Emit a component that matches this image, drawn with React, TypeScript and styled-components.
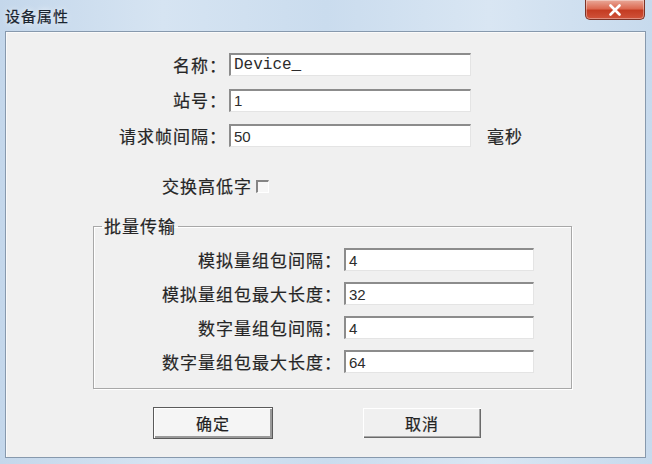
import styled, { createGlobalStyle } from 'styled-components'

const GlobalStyle = createGlobalStyle`
	html, body {
		margin: 0;
		padding: 0;
		background: #c9dbed;
	}
	* {
		box-sizing: border-box;
	}
`

const CJK = `"Noto Sans CJK SC", "Noto Sans", sans-serif`

const topFields = [
	{ label: '名称：', value: 'Device_', mono: true },
	{ label: '站号：', value: '1' },
	{ label: '请求帧间隔：', value: '50', unit: '毫秒' },
]

const batchFields = [
	{ label: '模拟量组包间隔：', value: '4' },
	{ label: '模拟量组包最大长度：', value: '32' },
	{ label: '数字量组包间隔：', value: '4' },
	{ label: '数字量组包最大长度：', value: '64' },
]

const App = () => {
	return (
		<>
			<GlobalStyle />
			<Window>
				<TitleBar>
					<Title>设备属性</Title>
					<CloseButton aria-label='关闭'>
						<svg width='14' height='12' viewBox='0 0 14 12'>
							<path
								d='M2.5 1.5 L11.5 10.5 M11.5 1.5 L2.5 10.5'
								stroke='#fff'
								strokeWidth='2.6'
								strokeLinecap='round'
							/>
						</svg>
					</CloseButton>
				</TitleBar>
				<Panel>
					<TopForm>
						{topFields.map((f) => (
							<FieldRow key={f.label}>
								<Label width={221}>{f.label}</Label>
								<Input width={242} mono={f.mono}>
									{f.value}
								</Input>
								{f.unit && <Unit>{f.unit}</Unit>}
							</FieldRow>
						))}
					</TopForm>
					<CheckRow>
						<Text>交换高低字</Text>
						<CheckBox />
					</CheckRow>
					<GroupBox>
						<Legend>批量传输</Legend>
						<GroupRows>
							{batchFields.map((f) => (
								<FieldRow key={f.label}>
									<Label width={248}>{f.label}</Label>
									<Input width={190}>{f.value}</Input>
								</FieldRow>
							))}
						</GroupRows>
					</GroupBox>
					<ButtonRow>
						<DialogButton primary>确定</DialogButton>
						<DialogButton>取消</DialogButton>
					</ButtonRow>
				</Panel>
			</Window>
		</>
	)
}

export default App

const Window = styled.div`
	width: 652px;
	height: 464px;
	display: flex;
	flex-direction: column;
	padding: 0 6px 6px 5px;
	background: linear-gradient(
		90deg,
		#c4d7eb 0%,
		#d6e4f2 25%,
		#cadcee 50%,
		#d9e6f3 75%,
		#c7daed 100%
	);
	overflow: hidden;
`

const TitleBar = styled.div`
	height: 31px;
	flex-shrink: 0;
	display: flex;
	justify-content: space-between;
	align-items: flex-start;
`

const Title = styled.div`
	padding-top: 7px;
	font-family: ${CJK};
	font-size: 15px;
	line-height: 18px;
	color: #1a2530;
	letter-spacing: 1px;
	-webkit-text-stroke: 0.2px #1a2530;
	text-shadow: 0 0 6px rgba(255, 255, 255, 0.9);
`

const CloseButton = styled.div`
	width: 60px;
	height: 20px;
	margin-right: 1px;
	display: flex;
	align-items: center;
	justify-content: center;
	border: 1px solid #7c3326;
	border-top: none;
	border-radius: 0 0 5px 5px;
	background: linear-gradient(180deg, #e9a999 0%, #dc6a52 45%, #c43c22 55%, #d0533a 100%);
	box-shadow: inset 0 0 0 1px rgba(255, 255, 255, 0.35);
`

const Panel = styled.div`
	flex: 1;
	display: flex;
	flex-direction: column;
	border: 1px solid #8799ad;
	background: #f0f0f0;
	box-shadow: inset 1px 1px 0 #fafafa;
	font-family: ${CJK};
	color: #262626;
	-webkit-text-stroke: 0.2px #262626;
`

const TopForm = styled.div`
	display: flex;
	flex-direction: column;
	gap: 12.5px;
	padding-top: 21px;
`

const FieldRow = styled.div`
	display: flex;
	align-items: center;
	height: 23px;
`

const Label = styled.div<{ width: number }>`
	width: ${({ width }) => width}px;
	margin-right: 2px;
	text-align: right;
	font-size: 17px;
	line-height: 20px;
	letter-spacing: 1px;
	white-space: nowrap;
`

const Input = styled.div<{ width: number; mono?: boolean }>`
	width: ${({ width }) => width}px;
	height: 23px;
	padding-left: 3px;
	display: flex;
	align-items: center;
	background: #fff;
	border-top: 2px solid #8c8c8c;
	border-left: 2px solid #8c8c8c;
	border-right: 1px solid #e4e4e4;
	border-bottom: 1px solid #e4e4e4;
	font-family: ${({ mono }) => (mono ? '"Liberation Mono", monospace' : '"Liberation Sans", sans-serif')};
	font-size: ${({ mono }) => (mono ? '16px' : '15px')};
	color: #2c2c2c;
	-webkit-text-stroke: 0;
`

const Unit = styled.div`
	margin-left: 16px;
	font-size: 17px;
	letter-spacing: 1px;
`

const CheckRow = styled.div`
	display: flex;
	align-items: center;
	height: 20px;
	margin-top: 29px;
	padding-left: 156px;
`

const Text = styled.span`
	font-size: 17px;
	line-height: 20px;
	letter-spacing: 1px;
`

const CheckBox = styled.span`
	width: 13px;
	height: 13px;
	margin-left: 4px;
	background: #f7f7f7;
	border-top: 2px solid #858585;
	border-left: 2px solid #858585;
	border-right: 1px solid #fff;
	border-bottom: 1px solid #fff;
`

const GroupBox = styled.fieldset`
	width: 479px;
	margin: 21px 0 0 87px;
	padding: 13px 0 15px 0;
	border: 1px solid #a8a8a8;
	box-shadow: 1px 1px 0 #fff, inset 1px 1px 0 #fff;
	min-width: 0;
`

const Legend = styled.legend`
	margin-left: 8px;
	padding: 0 2px;
	font-size: 17px;
	line-height: 18px;
	letter-spacing: 1px;
`

const GroupRows = styled.div`
	display: flex;
	flex-direction: column;
	gap: 11px;
`

const ButtonRow = styled.div`
	display: flex;
	gap: 89px;
	margin-top: 18px;
	padding-left: 147px;
`

const DialogButton = styled.div<{ primary?: boolean }>`
	width: 120px;
	height: 32px;
	display: flex;
	align-items: center;
	justify-content: center;
	font-size: 16px;
	letter-spacing: 1px;
	color: #222;
	background: ${({ primary }) => (primary ? '#f5f5f5' : '#f0f0f0')};
	border: 1px solid ${({ primary }) => (primary ? '#5a5a5a' : '#f0f0f0')};
	box-shadow: ${({ primary }) =>
		primary
			? 'inset 1px 1px 0 #fff, inset -2px -2px 0 #9a9a9a'
			: 'inset 1px 1px 0 #fff, inset -1px -1px 0 #6a6a6a, inset -2px -2px 0 #a8a8a8'};
`
